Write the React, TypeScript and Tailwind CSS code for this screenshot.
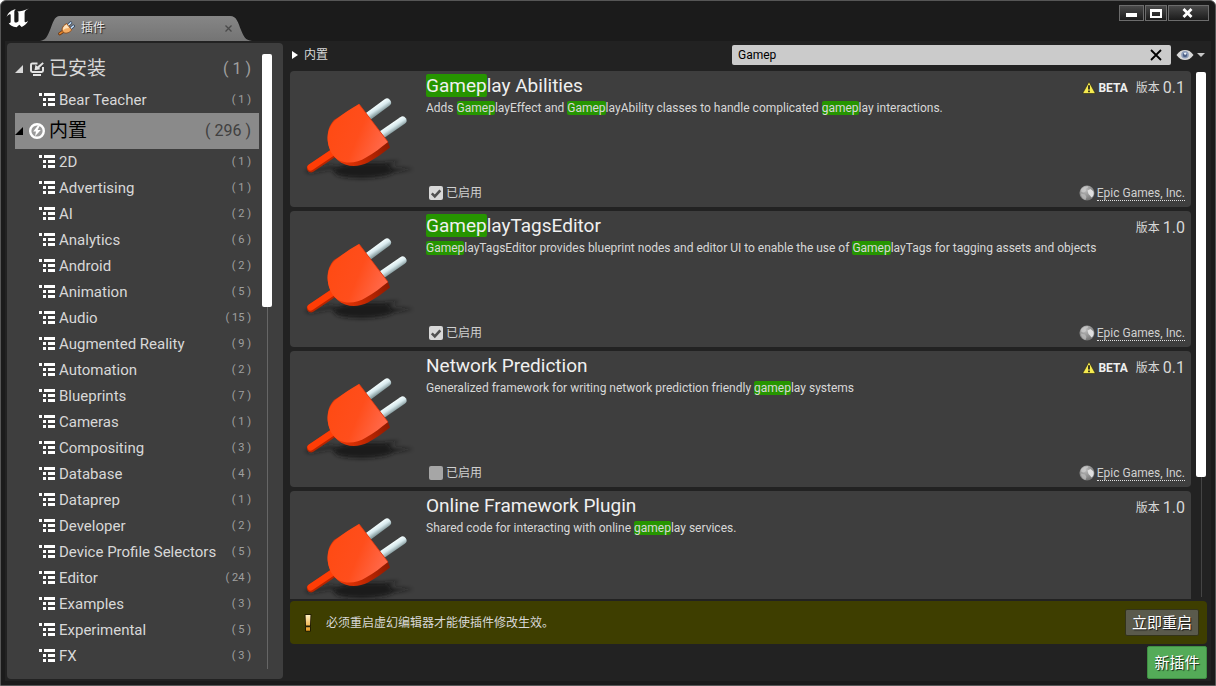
import { useState } from 'react';
import type { ReactNode } from 'react';

type Category = { name: string; count: number };

const CATEGORIES: Category[] = [
  { name: '2D', count: 1 },
  { name: 'Advertising', count: 1 },
  { name: 'AI', count: 2 },
  { name: 'Analytics', count: 6 },
  { name: 'Android', count: 2 },
  { name: 'Animation', count: 5 },
  { name: 'Audio', count: 15 },
  { name: 'Augmented Reality', count: 9 },
  { name: 'Automation', count: 2 },
  { name: 'Blueprints', count: 7 },
  { name: 'Cameras', count: 1 },
  { name: 'Compositing', count: 3 },
  { name: 'Database', count: 4 },
  { name: 'Dataprep', count: 1 },
  { name: 'Developer', count: 2 },
  { name: 'Device Profile Selectors', count: 5 },
  { name: 'Editor', count: 24 },
  { name: 'Examples', count: 3 },
  { name: 'Experimental', count: 5 },
  { name: 'FX', count: 3 },
];

type Plugin = {
  title: string;
  description: string;
  version: string;
  beta?: boolean;
  enabled?: boolean;
  author?: string;
};

const PLUGINS: Plugin[] = [
  {
    title: 'Gameplay Abilities',
    description:
      'Adds GameplayEffect and GameplayAbility classes to handle complicated gameplay interactions.',
    version: '0.1',
    beta: true,
    enabled: true,
    author: 'Epic Games, Inc.',
  },
  {
    title: 'GameplayTagsEditor',
    description:
      'GameplayTagsEditor provides blueprint nodes and editor UI to enable the use of GameplayTags for tagging assets and objects',
    version: '1.0',
    enabled: true,
    author: 'Epic Games, Inc.',
  },
  {
    title: 'Network Prediction',
    description: 'Generalized framework for writing network prediction friendly gameplay systems',
    version: '0.1',
    beta: true,
    enabled: false,
    author: 'Epic Games, Inc.',
  },
  {
    title: 'Online Framework Plugin',
    description: 'Shared code for interacting with online gameplay services.',
    version: '1.0',
  },
];

function Highlight({ text, term }: { text: string; term: string }) {
  if (!term) return <>{text}</>;
  const out: ReactNode[] = [];
  const lower = text.toLowerCase();
  const needle = term.toLowerCase();
  let from = 0;
  let at = lower.indexOf(needle);
  while (at !== -1) {
    out.push(text.slice(from, at));
    out.push(
      <mark key={at} className="rounded-xs bg-[#269500] text-inherit">
        {text.slice(at, at + needle.length)}
      </mark>,
    );
    from = at + needle.length;
    at = lower.indexOf(needle, from);
  }
  out.push(text.slice(from));
  return <>{out}</>;
}

function UnrealLogo() {
  return (
    <svg viewBox="0 0 24 20" className="h-5 w-6" aria-hidden="true">
      <path
        d="M.6 9C2 4.600 5.400 1.900 9.800 1.200 8.500 2.200 8.300 3 8.300 4.400v8.300c0 1.200.5 1.900 1.500 1.900.9 0 1.900-.6 2.700-1.400V5.400c0-1-.4-1.500-1.300-1.900C14.600 3.300 18.600 2.600 22.800.6c-2.400 1.500-4.200 2.600-4.200 4.300v8c0 1 .4 1.400 1.100 1.400.8 0 1.600-.7 2.500-1.700-.9 2.900-3.500 5.200-6.500 6.300l-2.400-2.200-2.700 2.500C6.600 19 3.700 17.300 2.600 14.800c1 .5 2.100.2 2.100-1.300V7.200c0-1-.5-1.200-1.200-1C2.500 6.600 1.500 7.600.6 9z"
        fill="#fff"
      />
    </svg>
  );
}

function TabPlugIcon() {
  return (
    <svg viewBox="0 0 17 15" className="h-[15px] w-[17px]" aria-hidden="true">
      <path d="M1.800 12.800 5 10.500" stroke="#6b3812" strokeWidth="3.200" strokeLinecap="round" />
      <path d="M1.800 12.600 5 10.300" stroke="#e8862c" strokeWidth="1.600" strokeLinecap="round" />
      <path d="M10 4.300 12.700 1.900M12.600 7.500 15.300 5.100" stroke="#2c3d55" strokeWidth="3" strokeLinecap="round" />
      <path d="M10 4.300 12.700 1.900M12.600 7.500 15.300 5.100" stroke="#c4def8" strokeWidth="1.600" strokeLinecap="round" />
      <path
        d="M8.600 2.500 13.800 9C11.800 11.300 8.800 12.900 6 11.700 2.800 9.700 3.600 5.500 8.600 2.500z"
        fill="#f5ad62"
        stroke="#84461a"
        strokeWidth=".8"
      />
      <path d="M8.500 3.600C5.500 5.400 4.600 7.300 5.300 9.300 6.500 7.800 8.700 7 11.200 7z" fill="#ffe2bc" />
    </svg>
  );
}

function ListIcon() {
  return (
    <svg viewBox="0 0 16 14" className="h-[14px] w-4 shrink-0" fill="#fff" aria-hidden="true">
      <path d="M0 0h3v3H0zM5 0h11v3H5zM4 5h3v3H4zM9 5h7v3H9zM4 10h3v3H4zM9 10h7v3H9z" />
    </svg>
  );
}

function InstalledIcon() {
  return (
    <svg viewBox="0 0 14 14" className="mx-px h-[14px] w-[14px] shrink-0" aria-hidden="true">
      <path d="M7.500 1.400H2.400Q1 1.400 1 2.800v5.800Q1 10 2.400 10h9.200Q13 10 13 8.600V5" fill="none" stroke="#e4e4e4" strokeWidth="2" />
      <path d="M12.600 .2 13.800 1.600 9.200 6 10.300 7.200 4.500 8.200 5.500 2.700 7.300 4.400z" fill="#e4e4e4" />
      <path d="M3 12h8v2H3z" fill="#e4e4e4" />
    </svg>
  );
}

function BuiltInIcon() {
  return (
    <svg viewBox="0 0 16 16" className="h-4 w-4 shrink-0" aria-hidden="true">
      <circle cx="8" cy="8" r="6.800" fill="#9a9a9a" stroke="#fff" strokeWidth="2.400" />
      <path d="M8.700 2.800 4.200 8.500H7L6 13.200 11.800 7H8.600l2-4z" fill="#fff" />
    </svg>
  );
}

function PlugArt() {
  return (
    <svg viewBox="0 0 136 136" className="h-[136px] w-[136px] shrink-0" aria-hidden="true">
      <defs>
        <linearGradient id="plugBody" x1="0" y1=".2" x2="1" y2=".6">
          <stop offset="0" stopColor="#ff4a12" />
          <stop offset=".55" stopColor="#ff4e1c" />
          <stop offset="1" stopColor="#ff6a4c" />
        </linearGradient>
        <linearGradient id="plugSide" gradientUnits="userSpaceOnUse" x1="44" y1="90" x2="100" y2="76">
          <stop offset="0" stopColor="#f43c08" />
          <stop offset=".45" stopColor="#c82a02" />
          <stop offset="1" stopColor="#8f1a00" />
        </linearGradient>
        <linearGradient id="plugProng" gradientUnits="userSpaceOnUse" x1="0" y1="0" x2="4.500" y2="6.800" gradientTransform="translate(86 34)">
          <stop offset="0" stopColor="#f6ffff" />
          <stop offset=".5" stopColor="#d8eaee" />
          <stop offset="1" stopColor="#8a9fa2" />
        </linearGradient>
        <linearGradient id="plugProngLow" gradientUnits="userSpaceOnUse" x1="0" y1="0" x2="4.500" y2="6.800" gradientTransform="translate(100 53)">
          <stop offset="0" stopColor="#f6ffff" />
          <stop offset=".5" stopColor="#d8eaee" />
          <stop offset="1" stopColor="#8a9fa2" />
        </linearGradient>
        <filter id="plugBlur" x="-20%" y="-60%" width="140%" height="220%">
          <feGaussianBlur stdDeviation="2" />
        </filter>
      </defs>
      <g filter="url(#plugBlur)" fill="#171717">
        <path d="M14 100 42 94 48 97 20 102z" opacity=".7" />
        <path d="M42 99C48 93 70 91 92 92L110 90 98 95 102 97 124 98 104 101C94 108 60 109 47 104z" opacity=".9" />
      </g>
      <path d="M21 97.200 43 82.500" stroke="#b82500" strokeWidth="8.400" strokeLinecap="round" />
      <path d="M20.700 96.300 43 81.300" stroke="#ff3d06" strokeWidth="6.600" strokeLinecap="round" />
      <path d="M78 45.500 97 31.500" stroke="url(#plugProng)" strokeWidth="8" strokeLinecap="round" />
      <path d="M90 65 112.500 49.500" stroke="url(#plugProngLow)" strokeWidth="8" strokeLinecap="round" />
      <path d="M69 33 98 71 100 76.500C93 82 86 87 78 91.500 68 96.500 56 96.500 47.500 89 36 78 34 60 44 49z" fill="url(#plugSide)" />
      <path d="M69 33 98 71C91 76.500 84 82 76 86.500 65 93.500 50 94 42.500 83.500 34.500 71 37 56 46 48.500 54 42 61 37.500 69 33z" fill="url(#plugBody)" />
      <path d="M69 33 98 71" stroke="#e03a10" strokeWidth=".8" />
    </svg>
  );
}

function WarningIcon() {
  return (
    <svg viewBox="0 0 14 14" className="h-[14px] w-[14px]" aria-hidden="true">
      <path d="M7 .8 13.400 12.500H.6z" fill="#f6ea50" stroke="#24220e" strokeWidth=".6" strokeLinejoin="round" />
      <path d="M7 4.200v4.200M7 9.400v1.800" stroke="#1c1c1c" strokeWidth="1.700" />
    </svg>
  );
}

function GlobeIcon() {
  return (
    <svg viewBox="0 0 16 16" className="h-4 w-4" aria-hidden="true">
      <defs>
        <radialGradient id="globeSea" cx=".4" cy=".3" r=".75">
          <stop offset="0" stopColor="#bdbdbd" />
          <stop offset="1" stopColor="#6f6f6f" />
        </radialGradient>
      </defs>
      <circle cx="8" cy="8" r="7.500" fill="url(#globeSea)" />
      <path d="M2 4.500C4 1.800 7 .9 9.500 1.200L8.500 3 6.500 4 7 6 5 7.500 2.500 7z" fill="#cfcfcf" opacity=".7" />
      <path d="M8.500 5.500 11.500 4 14.500 6.500C15.200 9 14.500 11.500 12.500 12.500L11 10.500 9.500 9z" fill="#e0e0e0" />
      <path d="M2 8.500 6 9.500 7.500 12 6.500 15C4 14.300 2 12 2 8.500z" fill="#c0c0c0" opacity=".7" />
    </svg>
  );
}

function EyeIcon() {
  return (
    <svg viewBox="0 0 18 12" className="h-3 w-[18px]" aria-hidden="true">
      <path d="M.5 6C3 2.300 6 1 9 1s6 1.300 8.500 5C15 9.700 12 11 9 11S3 9.700.5 6z" fill="#d9d9d9" />
      <circle cx="9" cy="5.800" r="3.800" fill="#8d9dba" />
      <circle cx="9" cy="6" r="2.200" fill="#4d6085" />
      <circle cx="9.200" cy="4.600" r="1.200" fill="#eef3fa" />
    </svg>
  );
}

function GroupRow({ icon, label, count, selected }: { icon: ReactNode; label: string; count: number; selected?: boolean }) {
  return (
    <button
      type="button"
      aria-expanded="true"
      className={
        selected
          ? 'flex h-9 w-full shrink-0 items-center bg-[#8a8a8a] pr-2 text-left text-black'
          : 'flex h-9 w-full shrink-0 items-center pr-2 text-left text-[#d8d8d8]'
      }
    >
      <svg viewBox="0 0 8 8" className="mr-[6px] h-2 w-2 shrink-0" aria-hidden="true">
        <path d="M8 0v8H0z" fill="currentColor" />
      </svg>
      {icon}
      <span className="ml-1 flex-1 text-[19px]">{label}</span>
      <span className={selected ? 'text-base text-[#404040]' : 'text-base text-[#a0a0a0]'}>
        ( {count} )
      </span>
    </button>
  );
}

function CategoryRow({ name, count }: Category) {
  return (
    <button type="button" className="flex h-[26px] w-full shrink-0 items-center pl-6 pr-2 text-left">
      <ListIcon />
      <span className="ml-1 flex-1 whitespace-nowrap text-[15px] text-[#d8d8d8]">{name}</span>
      <span className="whitespace-nowrap text-[11px] text-[#a0a0a0]">( {count} )</span>
    </button>
  );
}

function PluginCard({ plugin, term }: { plugin: Plugin; term: string }) {
  const [enabled, setEnabled] = useState(plugin.enabled ?? false);
  return (
    <article className="flex h-[136px] shrink-0 rounded-sm bg-[#3e3e3e]">
      <PlugArt />
      <div className="flex min-w-0 flex-1 flex-col pb-[6px] pr-[6px] pt-1">
        <div className="flex h-[26px] justify-between">
          <h2 className="text-[19px] leading-[22px] text-[#f0f0f0]">
            <Highlight text={plugin.title} term={term} />
          </h2>
          <div className="flex items-center text-xs text-[#d8d8d8]">
            {plugin.beta && (
              <>
                <WarningIcon />
                <strong className="ml-[2px] mr-2 text-[#f0f0f0]">BETA</strong>
              </>
            )}
            <span className="mr-[3px]">版本</span>
            <span className="text-base">{plugin.version}</span>
          </div>
        </div>
        <p className="text-xs leading-[14px] text-[#d8d8d8]">
          <Highlight text={plugin.description} term={term} />
        </p>
        <div className="mt-auto flex items-center justify-between text-xs text-[#d0d0d0]">
          {plugin.enabled !== undefined && (
            <label className="ml-[3px] flex items-center gap-[3px]">
              <span className="relative flex">
                <input
                  type="checkbox"
                  checked={enabled}
                  onChange={() => setEnabled(!enabled)}
                  className="h-[14px] w-[14px] appearance-none rounded-xs bg-[#a6a6a6] checked:bg-[#d8d8d8]"
                />
                {enabled && (
                  <svg viewBox="0 0 14 14" className="pointer-events-none absolute inset-0" aria-hidden="true">
                    <path d="M2.800 7.300 5.800 10.300 11.300 4.300" fill="none" stroke="#505050" strokeWidth="2.600" />
                  </svg>
                )}
              </span>
              已启用
            </label>
          )}
          {plugin.author && (
            <a href="#author" className="flex items-center gap-[2px]">
              <GlobeIcon />
              <span className="border-b border-dotted border-[#e0e0e0] leading-[14px]">{plugin.author}</span>
            </a>
          )}
        </div>
      </div>
    </article>
  );
}

export default function App() {
  const [query, setQuery] = useState('Gamep');
  return (
    <div className="flex h-screen flex-col overflow-hidden rounded-t-md border border-[#565656] bg-[#1b1b1b] font-[Roboto,'Noto_Sans_CJK_SC',sans-serif] text-[#d8d8d8]">
      <header className="flex h-10 shrink-0 items-stretch justify-between pl-[5px]">
        <div className="flex">
          <div className="pt-[7px]">
            <UnrealLogo />
          </div>
          <div className="relative ml-[10px] mt-[14px] flex h-[26px] w-[212px] items-center pl-[18px] pr-5">
            <svg viewBox="0 0 212 26" preserveAspectRatio="none" className="absolute inset-0 h-full w-full" aria-hidden="true">
              <defs>
                <linearGradient id="tabFill" x1="0" y1="0" x2="0" y2="1">
                  <stop offset="0" stopColor="#868686" />
                  <stop offset="1" stopColor="#747474" />
                </linearGradient>
              </defs>
              <path d="M0 26C6 25 7 22 10 15 13 8 14 1 20 1H190C197 1 198 8 201 15 204 22 205 25 212 26z" fill="url(#tabFill)" />
            </svg>
            <span className="relative flex flex-1 items-center gap-[6px]">
              <TabPlugIcon />
              <span className="text-xs text-[#e8e8e8] [text-shadow:1px_1px_1px_rgba(0,0,0,0.8)]">插件</span>
            </span>
            <button type="button" aria-label="关闭标签" className="relative">
              <svg viewBox="0 0 7 7" className="h-[7px] w-[7px]" aria-hidden="true">
                <path d="M.5.5 6.500 6.500M6.500.5.5 6.500" stroke="#4a4a4a" strokeWidth="1.300" />
              </svg>
            </button>
          </div>
        </div>
        <div className="mr-[6px] mt-1 flex h-4 gap-px">
          <button type="button" aria-label="最小化" className="flex w-[25px] items-center justify-center border border-[#6c6c6c] bg-linear-to-b from-[#4a4a4a] to-[#1c1c1c]">
            <svg viewBox="0 0 11 4" className="mt-1 h-1 w-[11px]" aria-hidden="true"><path d="M0 0h11v4H0z" fill="#fff" /></svg>
          </button>
          <button type="button" aria-label="最大化" className="flex w-[22px] items-center justify-center border border-[#6c6c6c] bg-linear-to-b from-[#4a4a4a] to-[#1c1c1c]">
            <svg viewBox="0 0 12 9" className="h-[9px] w-3" aria-hidden="true"><path d="M0 0h12v9H0zM2 3v4h8V3z" fill="#fff" fillRule="evenodd" /></svg>
          </button>
          <button type="button" aria-label="关闭" className="flex w-[41px] items-center justify-center border border-[#6c6c6c] bg-linear-to-b from-[#4a4a4a] to-[#1c1c1c] pr-[2px]">
            <svg viewBox="0 0 11 10" className="h-[10px] w-[11px]" aria-hidden="true"><path d="M1.500 1 9.500 9M9.500 1 1.500 9" stroke="#fff" strokeWidth="2.800" /></svg>
          </button>
        </div>
      </header>

      <div className="mx-1 mb-1 flex min-h-0 flex-1 gap-[7px] bg-[#222] px-[2px] pb-[2px] pt-[2px]">
        <nav className="flex w-[276px] shrink-0 rounded-sm bg-[#3e3e3e] pl-2 pr-[11px]">
          <div className="mr-[3px] flex min-w-0 flex-1 flex-col overflow-hidden pt-2">
            <GroupRow icon={<InstalledIcon />} label="已安装" count={1} />
            <CategoryRow name="Bear Teacher" count={1} />
            <GroupRow icon={<BuiltInIcon />} label="内置" count={296} selected />
            {CATEGORIES.map((c) => (
              <CategoryRow key={c.name} {...c} />
            ))}
          </div>
          <div className="flex w-[10px] flex-col items-center pb-[10px] pt-[11px]">
            <div className="h-[253px] w-full rounded-xs bg-white" />
            <div className="w-px flex-1 bg-[#666]" />
          </div>
        </nav>

        <main className="flex min-w-0 flex-1 flex-col pr-[2px]">
          <div className="flex h-7 shrink-0 items-start justify-between pt-[2px]">
            <div className="ml-[2px] flex h-5 items-center gap-[6px] text-xs">
              <svg viewBox="0 0 6 8" className="h-2 w-[6px]" aria-hidden="true"><path d="M0 0 6 4 0 8z" fill="#fff" /></svg>
              内置
            </div>
            <div className="flex h-5 items-center">
              <div className="flex h-5 w-[439px] items-center rounded-xs bg-[#cbcbcb] pl-[6px] pr-[9px]">
                <input
                  aria-label="搜索插件"
                  value={query}
                  onChange={(e) => setQuery(e.target.value)}
                  className="min-w-0 flex-1 bg-transparent text-xs text-black outline-none"
                />
                <button type="button" aria-label="清除" onClick={() => setQuery('')}>
                  <svg viewBox="0 0 12 12" className="h-3 w-3" aria-hidden="true"><path d="M1 1 11 11M11 1 1 11" stroke="#000" strokeWidth="1.800" /></svg>
                </button>
              </div>
              <button type="button" aria-label="视图选项" className="ml-[5px] mr-[2px] flex items-center gap-[3px]">
                <EyeIcon />
                <svg viewBox="0 0 8 4" className="h-1 w-2" aria-hidden="true"><path d="M0 0h8L4 4z" fill="#c8c8c8" /></svg>
              </button>
            </div>
          </div>

          <div className="flex min-h-0 flex-1">
            <div className="flex min-w-0 flex-1 flex-col gap-1 overflow-hidden">
              {PLUGINS.map((p) => (
                <PluginCard key={p.title} plugin={p} term={query} />
              ))}
            </div>
            <div className="ml-[5px] mr-px flex w-[10px] flex-col items-center pb-[2px] pt-px">
              <div className="h-[405px] w-full rounded-xs bg-white" />
              <div className="w-px flex-1 bg-[#444]" />
            </div>
          </div>

          <div className="mt-[2px] flex h-[43px] shrink-0 items-center rounded-sm bg-[#3e3e00] pl-[14px] pr-2">
            <svg viewBox="0 0 8 18" className="h-[18px] w-2" aria-hidden="true">
              <defs>
                <linearGradient id="bangFill" x1="0" y1="0" x2="0" y2="1">
                  <stop offset="0" stopColor="#fff0c0" />
                  <stop offset="1" stopColor="#e89a20" />
                </linearGradient>
              </defs>
              <path d="M1.500 1h5L6 11.500H2zM2 13.300h4v3.400H2z" fill="url(#bangFill)" stroke="#1a1400" strokeWidth="1.600" paintOrder="stroke" />
            </svg>
            <span className="ml-[14px] flex-1 text-xs">必须重启虚幻编辑器才能使插件修改生效。</span>
            <button type="button" className="h-[27px] rounded-xs border border-[#33331a] bg-[#5a5a4c] px-[6px] text-[15px] leading-5 text-white [text-shadow:1px_1px_1px_rgba(0,0,0,0.8)]">
              立即重启
            </button>
          </div>
          <div className="mt-[2px] flex shrink-0 justify-end">
            <button type="button" className="h-[33px] min-w-[60px] rounded-xs border border-[#3f8f43] bg-[#54ab58] px-[6px] text-[15px] leading-5 text-white [text-shadow:1px_1px_1px_rgba(0,0,0,0.8)]">
              新插件
            </button>
          </div>
        </main>
      </div>
    </div>
  );
}
